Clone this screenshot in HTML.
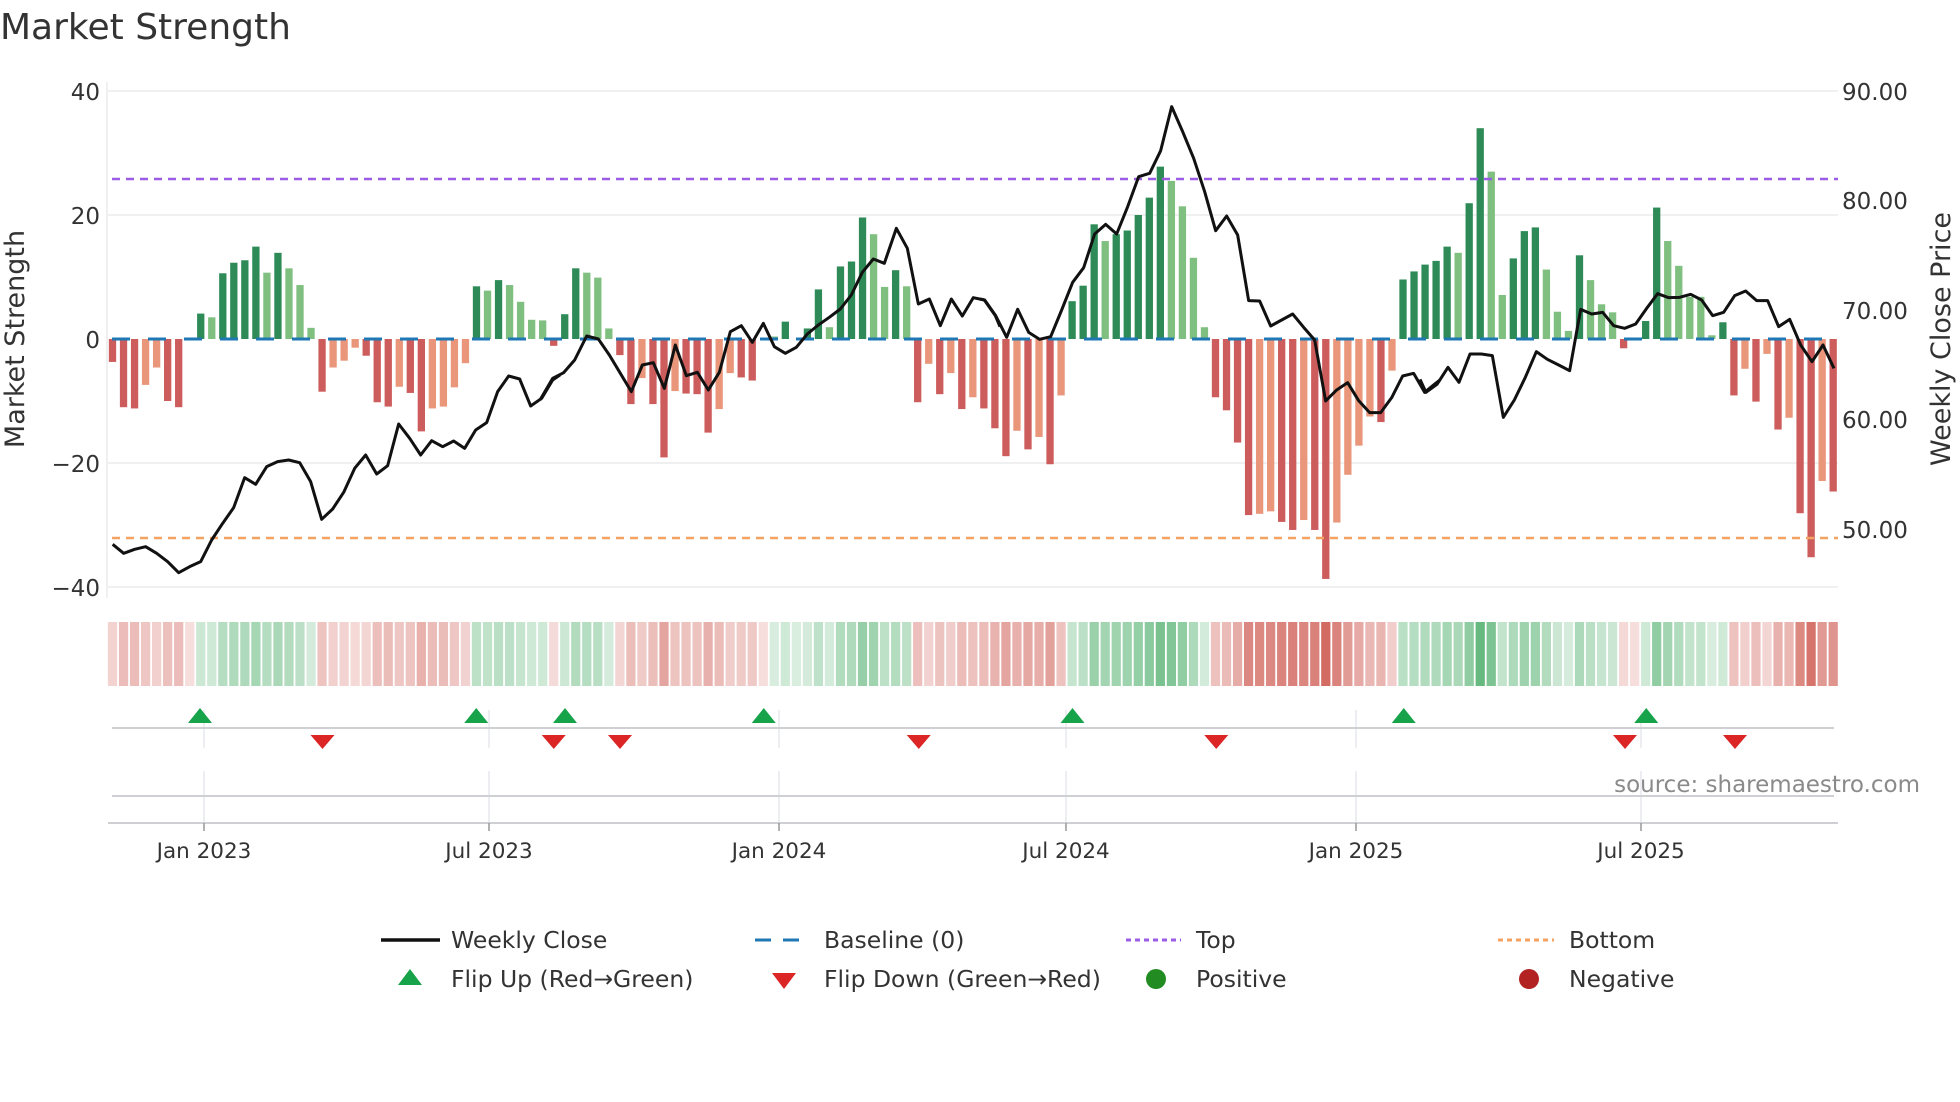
<!DOCTYPE html>
<html><head><meta charset="utf-8">
<style>
html,body{margin:0;padding:0;background:#fff;}
svg{display:block;font-family:"DejaVu Sans","Liberation Sans",sans-serif;}
</style></head>
<body>
<svg id="s" width="1960" height="1102" viewBox="0 0 1960 1102" xmlns="http://www.w3.org/2000/svg">
<rect width="1960" height="1102" fill="#fff"/>
<text x="0" y="39" font-size="36" fill="#333">Market Strength</text>
<g stroke="#ececec" stroke-width="1.5">
<line x1="108" y1="91" x2="1838" y2="91"/>
<line x1="108" y1="215" x2="1838" y2="215"/>
<line x1="108" y1="463" x2="1838" y2="463"/>
<line x1="108" y1="587" x2="1838" y2="587"/>
<line x1="107" y1="82" x2="107" y2="598"/>
</g>
<g font-size="23" fill="#333" text-anchor="end">
<text x="100" y="100">40</text>
<text x="100" y="224">20</text>
<text x="100" y="348">0</text>
<text x="100" y="472">−20</text>
<text x="100" y="596">−40</text>
</g>
<g font-size="23" fill="#333">
<text x="1842" y="100">90.00</text>
<text x="1842" y="209">80.00</text>
<text x="1842" y="319">70.00</text>
<text x="1842" y="428">60.00</text>
<text x="1842" y="538">50.00</text>
</g>
<text transform="translate(24,339) rotate(-90)" font-size="27" fill="#333" text-anchor="middle">Market Strength</text>
<text transform="translate(1950,339) rotate(-90)" font-size="27" fill="#333" text-anchor="middle">Weekly Close Price</text>
<g id="bars"></g>
<line x1="112" y1="339" x2="1838" y2="339" stroke="#1f77b4" stroke-width="3" stroke-dasharray="18 18"/>
<line x1="112" y1="179" x2="1838" y2="179" stroke="#9b5de5" stroke-width="2.5" stroke-dasharray="8 6"/>
<line x1="112" y1="538" x2="1838" y2="538" stroke="#f4a261" stroke-width="2.5" stroke-dasharray="8 6"/>
<g fill="none" stroke="#111" stroke-width="9" stroke-linejoin="round">
<polyline transform="translate(100,80) scale(0.33333)" points="38,1393 71,1420 104,1408 137,1400 170,1420 203,1445 236,1478 269,1460 302,1445 335,1380 368,1330 401,1283 434,1193 467,1213 500,1160 533,1145 566,1140 599,1148 632,1205 665,1318 698,1287 731,1237 764,1165 797,1125 830,1182 863,1157 896,1032 929,1075 962,1125 995,1082 1028,1100 1061,1083 1094,1105 1127,1050 1160,1028 1193,935 1226,888 1259,897 1292,978 1325,955 1358,900 1380,885"/>
<polyline transform="translate(540,80) scale(0.33333)" points="0,960 38,895 71,878 104,840 140,768 175,777 208,825 241,880 274,935 307,855 340,848 373,925 406,795 439,887 472,877 505,930 538,877 571,755 604,737 637,787 670,730 703,800 736,820 769,802 802,762 835,735 868,712 901,687 934,645 967,577 1000,537 1033,550 1069,445 1102,505 1135,672 1168,657 1201,737 1234,657 1267,708 1300,653 1333,660 1366,707 1380,740"/>
<polyline transform="translate(980,80) scale(0.33333)" points="0,657 14,660 47,707 80,772 113,688 146,757 179,778 212,770 245,690 278,607 311,563 344,462 377,433 410,462 443,380 476,290 509,280 542,212 575,80 608,155 641,235 674,335 707,452 740,408 773,465 806,662 839,663 872,738 905,720 938,702 971,742 1004,780 1037,963 1070,930 1103,908 1136,962 1169,998 1202,998 1235,953 1268,888 1301,880 1334,937 1367,910 1380,900"/>
<polyline transform="translate(1420,80) scale(0.33333)" points="0,898 18,937 51,913 84,862 117,907 150,822 184,822 217,827 250,1012 283,960 316,892 349,815 382,838 416,855 449,872 482,688 515,702 548,697 581,737 614,745 647,732 680,685 713,641 746,653 779,652 812,643 845,660 878,707 911,697 944,647 977,633 1010,662 1043,662 1076,740 1109,718 1142,795 1176,845 1209,795 1242,865"/>
</g>
<g id="strip"></g>
<g stroke="#e6e8ee" stroke-width="1.5">
<line x1="204" y1="710" x2="204" y2="748"/><line x1="489" y1="710" x2="489" y2="748"/><line x1="779" y1="710" x2="779" y2="748"/><line x1="1066" y1="710" x2="1066" y2="748"/><line x1="1356" y1="710" x2="1356" y2="748"/><line x1="1641" y1="710" x2="1641" y2="748"/>
<line x1="204" y1="771" x2="204" y2="822"/><line x1="489" y1="771" x2="489" y2="822"/><line x1="779" y1="771" x2="779" y2="822"/><line x1="1066" y1="771" x2="1066" y2="822"/><line x1="1356" y1="771" x2="1356" y2="822"/><line x1="1641" y1="771" x2="1641" y2="822"/>
</g>
<g stroke="#cfd0d3" stroke-width="2">
<line x1="112" y1="728" x2="1834" y2="728"/>
<line x1="112" y1="796" x2="1834" y2="796"/>
<line x1="108" y1="823" x2="1838" y2="823"/>
</g>
<g stroke="#999" stroke-width="1.5">
<line x1="204" y1="823" x2="204" y2="831"/><line x1="489" y1="823" x2="489" y2="831"/><line x1="779" y1="823" x2="779" y2="831"/><line x1="1066" y1="823" x2="1066" y2="831"/><line x1="1356" y1="823" x2="1356" y2="831"/><line x1="1641" y1="823" x2="1641" y2="831"/>
</g>
<g id="marks"></g>
<text x="1920" y="792" font-size="23" fill="#8a8a8a" text-anchor="end">source: sharemaestro.com</text>
<g font-size="21.5" fill="#333" text-anchor="middle">
<text x="204" y="858">Jan 2023</text><text x="489" y="858">Jul 2023</text><text x="779" y="858">Jan 2024</text><text x="1066" y="858">Jul 2024</text><text x="1356" y="858">Jan 2025</text><text x="1641" y="858">Jul 2025</text>
</g>
<g font-size="23.5" fill="#333">
<line x1="381" y1="940" x2="440" y2="940" stroke="#111" stroke-width="3.5"/>
<text x="451" y="948">Weekly Close</text>
<line x1="755" y1="940" x2="806" y2="940" stroke="#1f77b4" stroke-width="3" stroke-dasharray="16 12"/>
<text x="824" y="948">Baseline (0)</text>
<line x1="1126" y1="940" x2="1181" y2="940" stroke="#9b5de5" stroke-width="3" stroke-dasharray="5 4"/>
<text x="1196" y="948">Top</text>
<line x1="1498" y1="940" x2="1554" y2="940" stroke="#f4a261" stroke-width="3" stroke-dasharray="5 4"/>
<text x="1569" y="948">Bottom</text>
<polygon points="410,969 398,985 422,985" fill="#17a34a"/>
<text x="451" y="987">Flip Up (Red→Green)</text>
<polygon points="772,973 796,973 784,989" fill="#dc2626"/>
<text x="824" y="987">Flip Down (Green→Red)</text>
<circle cx="1156" cy="979" r="10" fill="#228b22"/>
<text x="1196" y="987">Positive</text>
<circle cx="1529" cy="979" r="10" fill="#b22222"/>
<text x="1569" y="987">Negative</text>
</g>
</svg>
<script>
(function(){
var V=[-3.7,-11,-11.2,-7.4,-4.6,-10,-11,0,4.1,3.5,10.6,12.3,12.7,14.9,10.7,13.9,11.4,8.7,1.8,-8.5,-4.6,-3.5,-1.4,-2.7,-10.2,-10.9,-7.7,-8.7,-14.9,-11.2,-10.9,-7.8,-3.9,8.5,7.8,9.5,8.7,6,3.1,3,-1.1,4,11.4,10.7,9.9,1.7,-2.6,-10.5,-6.3,-10.5,-19.1,-8.4,-8.8,-8.9,-15.1,-11.3,-5.5,-6.2,-6.7,0,0.4,2.8,0,1.7,8,1.9,11.7,12.5,19.6,16.9,8.4,11.1,8.5,-10.2,-4,-8.9,-5.5,-11.3,-9.4,-11.2,-14.4,-18.9,-14.8,-17.8,-15.8,-20.2,-9.1,6.1,8.6,18.5,15.8,16.9,17.5,20,22.8,27.8,25.5,21.4,13.1,1.9,-9.4,-11.5,-16.7,-28.4,-28.2,-27.8,-29.5,-30.8,-29.2,-30.8,-38.7,-29.6,-21.9,-17.2,-12.5,-13.4,-5.1,9.6,10.9,12,12.6,14.9,13.9,21.9,34,27,7.1,13,17.4,18,11.2,4.4,1.3,13.5,9.5,5.6,4.3,-1.5,0,2.9,21.2,15.8,11.8,6.8,6.8,0.6,2.7,-9.1,-4.8,-10.1,-2.4,-14.6,-12.7,-28.1,-35.2,-22.9,-24.6];
var F="dddllddxdl"+"ddddldllld"+"llldddlddl"+"llldldllll"+"dddlllddld"+"dldddllddx"+"ldxddldddl"+"ldldldldld"+"ddldldlddd"+"ldddddllll"+"ddddllddld"+"dlllldlddd"+"ddlddllddd"+"llldllldxd"+"dlllllddld"+"ldlddld";
var NS="http://www.w3.org/2000/svg";
var bars=document.getElementById('bars'),strip=document.getElementById('strip'),marks=document.getElementById('marks');
var st=11.03,x0=112.5,z=339,u=6.2,w=7.3,prev=-1;
function el(p,t,a){var e=document.createElementNS(NS,t);for(var k in a)e.setAttribute(k,a[k]);p.appendChild(e);return e;}
for(var i=0;i<V.length;i++){
 var v=V[i],x=x0+i*st,f=F[i];
 if(v!==0){
  var c=v>0?(f==='d'?'#2e8b57':'#7fbf7f'):(f==='d'?'#cd5c5c':'#e9967a');
  var h=Math.abs(v)*u;
  el(bars,'rect',{x:(x-w/2).toFixed(2),y:(v>0?z-h:z).toFixed(2),width:w,height:h.toFixed(2),fill:c});
  prev=v>0?1:-1;
 }
 var a=0.18+0.62*Math.min(Math.abs(v)/38,1);
 var col=prev>0?'rgba(46,160,80,'+a.toFixed(3)+')':'rgba(200,70,60,'+a.toFixed(3)+')';
 el(strip,'rect',{x:(x-st/2+0.9).toFixed(2),y:622,width:(st-1.8).toFixed(2),height:64,fill:col});
}
var up=[160,381,452,611,858,1123,1317],dn=[258,443,496,735,973,1300,1388];
up.forEach(function(d){var x=d*1.25;el(marks,'polygon',{points:(x)+',708 '+(x-12)+',723 '+(x+12)+',723',fill:'#17a34a'});});
dn.forEach(function(d){var x=d*1.25;el(marks,'polygon',{points:(x-12)+',735 '+(x+12)+',735 '+(x)+',749',fill:'#dc2626'});});
})();
</script>
</body></html>
